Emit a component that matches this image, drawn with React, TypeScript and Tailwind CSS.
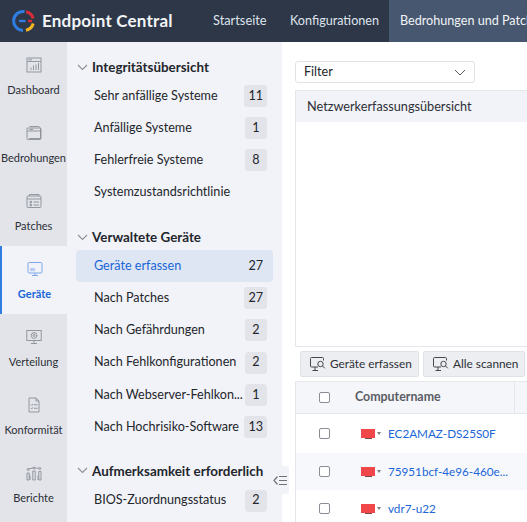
import React from "react";

function Logo() {
  return (
    <svg width="24" height="24" viewBox="0 0 24 24" fill="none" strokeWidth="3">
      <path d="M12.5 2.5 A9.5 9.5 0 1 0 11 21.4" stroke="#2f7de1" />
      <path d="M14 2.7 A9.5 9.5 0 0 1 21.2 9.5" stroke="#d92c3a" />
      <path d="M21.2 14.5 A9.5 9.5 0 0 1 14 21.3" stroke="#f4b51e" />
      <path d="M7 12 H13.5" stroke="#2f7de1" strokeWidth="2.4" />
      <path d="M16 12 H20" stroke="#d92c3a" strokeWidth="2.4" />
    </svg>
  );
}

const stroke = "#8b8f96";

function RailIcon({ name, color = stroke }: { name: string; color?: string }) {
  const common = { width: 16, height: 16, viewBox: "0 0 16 16", fill: "none", stroke: color, strokeWidth: 0.9 };
  switch (name) {
    case "dash":
      return (
        <svg {...common}>
          <rect x="1" y="1" width="14" height="14" />
          <path d="M1 4.5H15M2.5 2.8H6M5 13V10.5M7.5 13V8.5M10 13V7.5M12.5 13V6" />
        </svg>
      );
    case "threat":
      return (
        <svg {...common}>
          <path d="M3.5 1.5H13L14.5 3.5V13.5H3" />
          <rect x="1" y="3" width="14" height="11.5" rx="1" />
          <path d="M1 6H15M3.5 4.5H7" />
        </svg>
      );
    case "patch":
      return (
        <svg {...common}>
          <path d="M3.5 3V1.5H13V3" />
          <rect x="1" y="3" width="14" height="11.5" rx="1" />
          <path d="M1 6H15M4 8.3H5.5V9.8H4ZM4 11.3H5.5V12.8H4ZM7.5 9H13M7.5 12H13" />
        </svg>
      );
    case "device":
      return (
        <svg {...common}>
          <rect x="1" y="1.5" width="14" height="10.5" rx="1.2" />
          <path d="M8 12V14.5M5 14.5H11" />
          <rect x="3" y="7" width="5" height="3.2" fill={color} opacity="0.45" stroke="none" />
        </svg>
      );
    case "deploy":
      return (
        <svg {...common}>
          <rect x="0.8" y="1.5" width="14.4" height="10" />
          <path d="M8 11.5V14.5M5 14.5H11" />
          <circle cx="8" cy="6.5" r="2.8" strokeDasharray="1.3 0.5" strokeWidth="1.2" />
          <circle cx="8" cy="6.5" r="1" />
        </svg>
      );
    case "comp":
      return (
        <svg {...common}>
          <path d="M3 1H10L13 4V15H3Z" />
          <path d="M10 1V4H13M4.8 7.5L5.8 8.5L7 6.8M4.8 11L5.8 12L7 10.3M8 7.8H11.5M8 11.3H11.5" />
        </svg>
      );
    default:
      return (
        <svg {...common}>
          <path d="M1 15V8H3.2V15ZM6.8 15V6H9.2V15ZM12.8 15V6.5H15V15ZM4 15V10.5M12 15V10.5" />
          <circle cx="2.1" cy="4.5" r="1" />
          <circle cx="8" cy="3" r="1" />
          <circle cx="13.9" cy="3.5" r="1" />
          <path d="M2.8 3.8L7.2 3M8.8 3L13 3.3" />
        </svg>
      );
  }
}

function Rail({ icon, label, active }: { icon: string; label: string; active?: boolean }) {
  return (
    <div
      className={
        active
          ? "h-[68px] flex flex-col items-center pt-[15px] bg-[#f2f3f8] border-l-2 border-[#2f7de1] text-[#1a66d6] font-bold"
          : "h-[68px] flex flex-col items-center pt-[15px] text-[#2c2f36]"
      }
    >
      <RailIcon name={icon} color={active ? "#6f9fe6" : stroke} />
      <span className="mt-[9px] text-[11px] leading-[16px] whitespace-nowrap">{label}</span>
    </div>
  );
}

function Heading({ children, className = "" }: { children: React.ReactNode; className?: string }) {
  return (
    <div className={"flex items-center h-[20px] pl-[10px] " + className}>
      <svg width="11" height="7" viewBox="0 0 11 7" fill="none" stroke="#8b8f96" strokeWidth="1.1">
        <path d="M1 1L5.5 5.5L10 1" />
      </svg>
      <span className="ml-[4px] text-[13.4px] font-bold text-[#23262c] whitespace-nowrap">{children}</span>
    </div>
  );
}

function Row({ label, n, active, loose }: { label: string; n?: number; active?: boolean; loose?: boolean }) {
  return (
    <div
      className={
        (loose ? "h-[32.4px] " : "h-[32px] ") +
        "ml-[9px] mr-[9px] pl-[18px] pr-[6px] flex items-center justify-between rounded-sm " +
        (active ? "bg-[#dfe6f3]" : "")
      }
    >
      <span className={"text-[12.6px] whitespace-nowrap " + (active ? "text-[#1a66d6]" : "text-[#23262c]")}>{label}</span>
      {n !== undefined && (
        <span
          className={
            "h-[22px] min-w-[22px] px-[4px] flex items-center justify-center rounded-[3px] text-[12.6px] text-[#23262c] " +
            (active ? "" : "bg-[#e2e4e9]")
          }
        >
          {n}
        </span>
      )}
    </div>
  );
}

function ScanIcon() {
  return (
    <svg className="shrink-0" width="17" height="16" viewBox="0 0 17 16" fill="none" stroke="#44474d" strokeWidth="1">
      <path d="M8 11H1.5C0.9 11 0.5 10.6 0.5 10V2.5C0.5 1.9 0.9 1.5 1.5 1.5H12.5C13.1 1.5 13.5 1.9 13.5 2.5V4.5" />
      <path d="M5 11V14M2.5 14.5H8" />
      <circle cx="10.5" cy="8" r="2.7" />
      <path d="M12.5 10L14.8 12.3" />
    </svg>
  );
}

function DeviceCell({ name, striped, tall }: { name: string; striped?: boolean; tall?: boolean }) {
  return (
    <div className={"flex items-center " + (tall ? "h-[39px] " : "h-[37px] ") + (striped ? "bg-[#f7f8fc]" : "bg-white")}>
      <div className="w-[56px] flex justify-center">
        <span className="block w-[11px] h-[11px] border border-[#8a8d93] rounded-[2px] bg-white" />
      </div>
      <div className="ml-[9px] flex flex-col items-center w-[14px]">
        <span className="block w-[14px] h-[9px] bg-[#f0484a]" />
        <span className="block w-[7px] h-[1px] bg-[#7a4a4a]" />
      </div>
      <span className="ml-[2px] w-0 h-0 border-x-[2.5px] border-x-transparent border-t-[3px] border-t-[#7a7d84]" />
      <span className="ml-[7px] text-[11.7px] text-[#1a66d6] whitespace-nowrap">{name}</span>
    </div>
  );
}

export default function App() {
  return (
    <div
      className="w-[527px] h-[522px] overflow-hidden flex flex-col bg-white relative"
      style={{ fontFamily: "Lato, 'Noto Sans', sans-serif" }}
    >
      <header className="h-[42px] shrink-0 bg-[#2d3748] flex items-center text-white">
        <div className="ml-[12px] flex items-center w-[201px] shrink-0">
          <Logo />
          <span className="ml-[6px] text-[17px] font-bold tracking-[0.2px] whitespace-nowrap text-[#f2f4f7]">Endpoint Central</span>
        </div>
        <span className="text-[12.8px] text-[#dfe4ec] w-[77px] shrink-0 whitespace-nowrap">Startseite</span>
        <span className="text-[12.6px] text-[#dfe4ec] w-[99px] shrink-0 whitespace-nowrap">Konfigurationen</span>
        <div className="h-full flex-1 bg-[#46576f] pl-[11px] flex items-center overflow-hidden">
          <span className="text-[12.6px] text-[#f2f4f7] whitespace-nowrap">Bedrohungen und Patch</span>
        </div>
      </header>

      <div className="flex flex-1 min-h-0">
        <nav className="w-[67px] shrink-0 bg-[#e2e4ea]">
          <Rail icon="dash" label="Dashboard" />
          <Rail icon="threat" label="Bedrohungen" />
          <Rail icon="patch" label="Patches" />
          <Rail icon="device" label="Geräte" active />
          <Rail icon="deploy" label="Verteilung" />
          <Rail icon="comp" label="Konformität" />
          <Rail icon="chart" label="Berichte" />
        </nav>

        <aside className="w-[215px] shrink-0 bg-[#f2f3f8] pt-[15px] overflow-hidden">
          <Heading>Integritätsübersicht</Heading>
          <div className="mt-[3px]">
            <Row label="Sehr anfällige Systeme" n={11} />
            <Row label="Anfällige Systeme" n={1} />
            <Row label="Fehlerfreie Systeme" n={8} />
            <Row label="Systemzustandsrichtlinie" />
          </div>
          <Heading className="mt-[19px]">Verwaltete Geräte</Heading>
          <div className="mt-[3px]">
            <Row label="Geräte erfassen" n={27} active />
            <Row label="Nach Patches" n={27} />
            <Row label="Nach Gefährdungen" n={2} loose />
            <Row label="Nach Fehlkonfigurationen" n={2} loose />
            <Row label="Nach Webserver-Fehlkon..." n={1} loose />
            <Row label="Nach Hochrisiko-Software" n={13} loose />
          </div>
          <Heading className="mt-[17px]">Aufmerksamkeit erforderlich</Heading>
          <div className="mt-[4px]">
            <Row label="BIOS-Zuordnungsstatus" n={2} />
          </div>
        </aside>

        <main className="flex-1 min-w-0 pl-[13px] pt-[19px] overflow-hidden">
          <div className="w-[180px] h-[22px] border border-[#e0e2e8] rounded-[3px] flex items-center justify-between pl-[8px] pr-[8px]">
            <span className="text-[12.6px] text-[#23262c]">Filter</span>
            <svg width="12" height="7" viewBox="0 0 12 7" fill="none" stroke="#55585e" strokeWidth="1">
              <path d="M1 1L6 6L11 1" />
            </svg>
          </div>

          <section className="mt-[7px] h-[257px] border border-r-0 border-[#e6e7ec]">
            <div className="h-[31px] bg-[#f2f3f8] flex items-center pl-[11px] text-[12.7px] text-[#2c2f36] whitespace-nowrap">
              Netzwerkerfassungsübersicht
            </div>
          </section>

          <div className="mt-[4px] ml-[5px] flex gap-[4px]">
            <button className="w-[119px] h-[26px] shrink-0 rounded-[2px] border border-[#e0e2e7] bg-[#eceef1] flex items-center pl-[9px] gap-[3px] text-[11.8px] text-[#2c2f36] whitespace-nowrap">
              <ScanIcon />
              Geräte erfassen
            </button>
            <button className="w-[102px] h-[26px] shrink-0 rounded-[2px] border border-[#e0e2e7] bg-[#eceef1] flex items-center pl-[9px] gap-[3px] text-[11.8px] text-[#2c2f36] whitespace-nowrap">
              <ScanIcon />
              Alle scannen
            </button>
          </div>

          <div className="mt-[4px] border-t border-l border-[#e6e7ec]">
            <div className="h-[32px] bg-[#f5f6fa] border-b border-[#e6e7ec] flex items-center">
              <div className="w-[56px] flex justify-center">
                <span className="block w-[11px] h-[11px] border border-[#8a8d93] rounded-[2px] bg-white" />
              </div>
              <div className="w-[163px] h-full flex items-center border-r border-[#e6e7ec] pl-[3px] text-[12.4px] font-bold text-[#5a5d64]">
                Computername
              </div>
            </div>
            <DeviceCell name="EC2AMAZ-DS25S0F" tall />
            <DeviceCell name="75951bcf-4e96-460e..." striped />
            <DeviceCell name="vdr7-u22" />
          </div>
        </main>
      </div>

      <div className="absolute left-[271px] top-[466px] w-[18px] h-[28px] rounded-[3px] bg-[#f2f3f8] flex items-center justify-center">
        <svg width="15" height="11" viewBox="0 0 15 11" fill="none" stroke="#6d7178" strokeWidth="1.2">
          <path d="M4.5 1.5L1 5.5L4.5 9.5M6 1.5H14M6 5.5H14M6 9.5H14" />
        </svg>
      </div>
    </div>
  );
}
